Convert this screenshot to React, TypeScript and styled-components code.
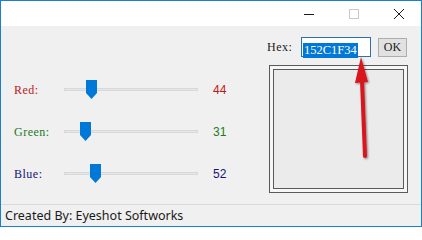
import { Fragment } from "react";
import styled, { createGlobalStyle } from "styled-components";

const GlobalStyle = createGlobalStyle`
  html, body {
    margin: 0;
    padding: 0;
    background: #ffffff;
  }
`;

interface Channel {
  label: string;
  value: number;
  color: string;
}

const channels: Channel[] = [
  { label: "Red:", value: 44, color: "#c01818" },
  { label: "Green:", value: 31, color: "#1d7a1d" },
  { label: "Blue:", value: 52, color: "#14147a" },
];

const TRACK_WIDTH = 134;
const THUMB_WIDTH = 11;

const Window = styled.div`
  position: relative;
  width: 422px;
  height: 227px;
  box-sizing: border-box;
  border: 1px solid #1a7fd4;
  display: flex;
  flex-direction: column;
  background: #f0f0f0;
  font-family: "Liberation Serif", serif;
  overflow: hidden;
`;

const TitleBar = styled.div`
  height: 25px;
  background: #ffffff;
  display: flex;
  justify-content: flex-end;
  align-items: stretch;
`;

const CaptionButton = styled.div<{ $dim?: boolean }>`
  width: 45px;
  display: flex;
  align-items: center;
  justify-content: center;
  color: ${(p) => (p.$dim ? "#c8c8c8" : "#1a1a1a")};
`;

const Body = styled.div`
  flex: 1;
  display: flex;
  justify-content: space-between;
  border-bottom: 1px solid #dadada;
`;

const Sliders = styled.div`
  display: grid;
  grid-template-columns: 50px ${TRACK_WIDTH}px auto;
  grid-auto-rows: 42px;
  align-content: start;
  padding: 43px 0 0 13px;
`;

const Label = styled.div<{ $color: string }>`
  color: ${(p) => p.$color};
  font-size: 12px;
  letter-spacing: 0.5px;
  display: flex;
  align-items: center;
  height: 42px;
`;

const Track = styled.div`
  position: relative;
  height: 42px;
  &::before {
    content: "";
    position: absolute;
    left: 0;
    right: 0;
    top: 19px;
    height: 3px;
    background: #e7e7e7;
    border: 1px solid #d8d8d8;
    box-sizing: border-box;
  }
`;

const Thumb = styled.svg`
  position: absolute;
  top: 11px;
`;

const Value = styled.div<{ $color: string }>`
  color: ${(p) => p.$color};
  font-family: "Liberation Sans", sans-serif;
  font-size: 12px;
  display: flex;
  align-items: center;
  height: 42px;
  padding-left: 15px;
`;

const RightPanel = styled.div`
  display: flex;
  flex-direction: column;
  align-items: flex-start;
  padding: 11px 12px 0 0;
  width: 140px;
`;

const HexRow = styled.div`
  display: flex;
  align-items: center;
  height: 20px;
  margin-left: -2px;
`;

const HexLabel = styled.span`
  font-size: 12px;
  color: #1a1a1a;
  width: 34px;
  letter-spacing: 0.5px;
`;

const HexInput = styled.div`
  width: 70px;
  height: 20px;
  box-sizing: border-box;
  border: 1px solid #2b6fb3;
  background: #ffffff;
  padding: 2px 0 0 1px;
`;

const Selected = styled.span`
  background: #0078d7;
  color: #ffffff;
  font-size: 12.5px;
  line-height: 15px;
  display: inline-block;
  padding: 0 1px;
`;

const OkButton = styled.button`
  margin-left: 7px;
  width: 29px;
  height: 19px;
  padding: 0;
  border: 1px solid #adadad;
  background: #e1e1e1;
  font-family: "Liberation Serif", serif;
  font-size: 12px;
  color: #1a1a1a;
`;

const Frame = styled.div`
  margin-top: 8px;
  width: 139px;
  height: 128px;
  box-sizing: border-box;
  border: 1px solid #5a5a5a;
  padding: 3px;
  background: #f6f6f6;
`;

const Swatch = styled.div`
  width: 100%;
  height: 100%;
  box-sizing: border-box;
  border: 1px solid #5a5a5a;
  background: #ebebeb;
`;

const StatusBar = styled.div`
  height: 21px;
  display: flex;
  align-items: center;
  padding-left: 4px;
  font-family: "Noto Sans", sans-serif;
  font-size: 12.5px;
  color: #1a1a1a;
`;

const Annotation = styled.svg`
  position: absolute;
  left: 0;
  top: 0;
  pointer-events: none;
`;

function App() {
  return (
    <>
      <GlobalStyle />
      <Window>
        <TitleBar>
          <CaptionButton>
            <svg width="10" height="10" viewBox="0 0 10 10">
              <path d="M0 5.5h10" stroke="currentColor" strokeWidth="1" />
            </svg>
          </CaptionButton>
          <CaptionButton $dim>
            <svg width="10" height="10" viewBox="0 0 10 10">
              <rect x="0.5" y="0.5" width="9" height="9" fill="none" stroke="currentColor" />
            </svg>
          </CaptionButton>
          <CaptionButton>
            <svg width="10" height="10" viewBox="0 0 10 10">
              <path d="M0 0L10 10M10 0L0 10" stroke="currentColor" strokeWidth="1" />
            </svg>
          </CaptionButton>
        </TitleBar>
        <Body>
          <Sliders>
            {channels.map((c) => (
              <Fragment key={c.label}>
                <Label $color={c.color}>{c.label}</Label>
                <Track>
                  <Thumb
                    width={THUMB_WIDTH}
                    height={19}
                    viewBox="0 0 11 19"
                    style={{ left: Math.round((c.value / 255) * (TRACK_WIDTH - THUMB_WIDTH)) + 1 }}
                  >
                    <path d="M0 0H11V13L5.5 19L0 13Z" fill="#0078d7" />
                  </Thumb>
                </Track>
                <Value $color={c.color}>{c.value}</Value>
              </Fragment>
            ))}
          </Sliders>
          <RightPanel>
            <HexRow>
              <HexLabel>Hex:</HexLabel>
              <HexInput>
                <Selected>152C1F34</Selected>
              </HexInput>
              <OkButton>OK</OkButton>
            </HexRow>
            <Frame>
              <Swatch />
            </Frame>
          </RightPanel>
        </Body>
        <StatusBar>Created By: Eyeshot Softworks</StatusBar>
        <Annotation width="422" height="227" viewBox="0 0 422 227">
          <defs>
            <filter id="shadow" x="-50%" y="-20%" width="200%" height="140%">
              <feDropShadow dx="1" dy="1" stdDeviation="1.2" floodColor="#000" floodOpacity="0.45" />
            </filter>
          </defs>
          <g filter="url(#shadow)">
            <path d="M364 155L361 79" stroke="#d8141c" strokeWidth="4" strokeLinecap="round" />
            <path d="M360 56L354 82L367 81Z" fill="#d8141c" />
          </g>
        </Annotation>
      </Window>
    </>
  );
}

export default App;
